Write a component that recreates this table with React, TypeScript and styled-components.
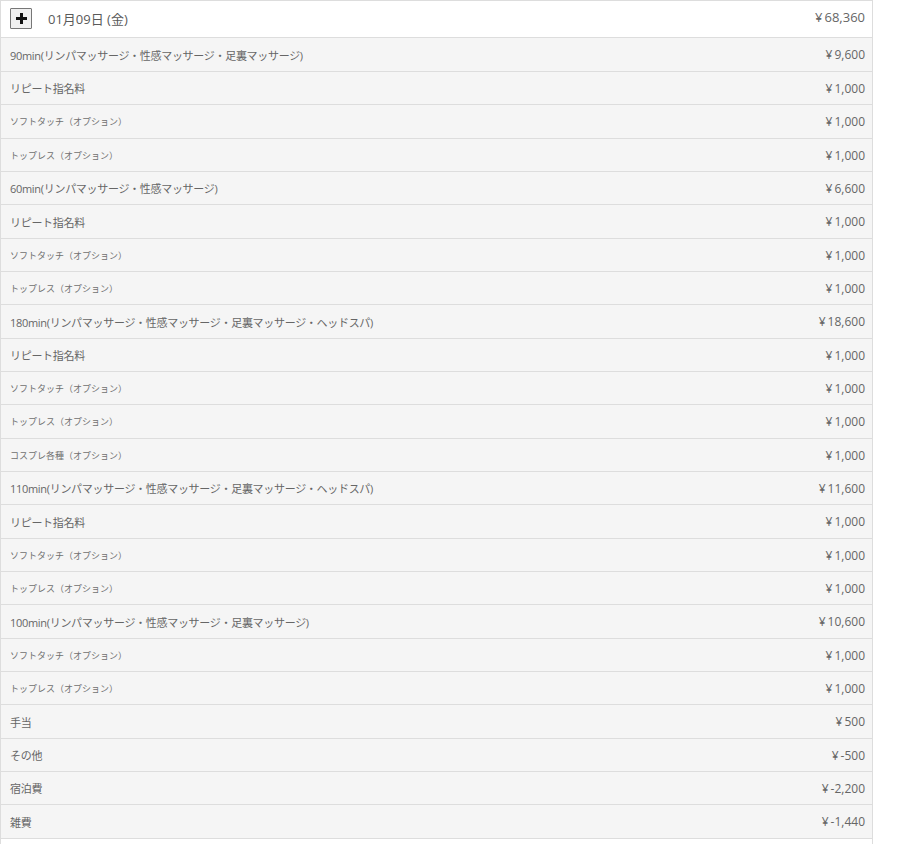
import React from "react";
import styled, { createGlobalStyle } from "styled-components";

const Global = createGlobalStyle`
  html, body { margin: 0; padding: 0; background: #fff; }
  body { font-family: "Open Sans", "Noto Sans CJK JP", sans-serif; color: #555; }
`;

const Table = styled.div`
  width: 873px;
  box-sizing: border-box;
  border-left: 1px solid #ddd;
  border-right: 1px solid #ddd;
  border-top: 1px solid #ddd;
`;

const HeaderRow = styled.div`
  display: flex;
  align-items: center;
  height: 37px;
  box-sizing: border-box;
  border-bottom: 1px solid #ddd;
  background: #fff;
  padding: 0 7px 0 9px;
`;

const ToggleButton = styled.button`
  width: 22px;
  height: 21px;
  margin-top: -1px;
  padding: 0;
  box-sizing: border-box;
  border: 1px solid #777;
  background: #f0f0f0;
  display: flex;
  align-items: center;
  justify-content: center;
  border-radius: 1px;
`;

const DateLabel = styled.span`
  margin-left: 16px;
  font-size: 13px;
  color: #5a5a5a;
  flex: 1;
  margin-top: -1px;
`;

const Total = styled.span`
  font-size: 13px;
  color: #666;
  margin-top: -4px;
`;

const Row = styled.div<{ $h: number }>`
  display: flex;
  align-items: center;
  justify-content: space-between;
  height: ${(p) => p.$h}px;
  box-sizing: border-box;
  border-bottom: 1px solid #ddd;
  background: #f5f5f5;
  padding: 0 7px 0 9px;
`;

const Label = styled.span<{ $small?: boolean }>`
  font-size: ${(p) => (p.$small ? "9px" : "11px")};
  letter-spacing: ${(p) => (p.$small ? "0" : "-0.3px")};
  color: ${(p) => (p.$small ? "#707070" : "#666")};
`;

const Amount = styled.span`
  font-size: 12px;
  color: #666;
`;

const Yen = styled.span`
  margin-right: 2px;
`;

const Tail = styled.div`
  height: 8px;
  background: #fff;
`;

type Item = { label: string; amount: string; small?: boolean };

const items: Item[] = [
  { label: "90min(リンパマッサージ・性感マッサージ・足裏マッサージ)", amount: "9,600" },
  { label: "リピート指名料", amount: "1,000" },
  { label: "ソフトタッチ（オプション）", amount: "1,000", small: true },
  { label: "トップレス（オプション）", amount: "1,000", small: true },
  { label: "60min(リンパマッサージ・性感マッサージ)", amount: "6,600" },
  { label: "リピート指名料", amount: "1,000" },
  { label: "ソフトタッチ（オプション）", amount: "1,000", small: true },
  { label: "トップレス（オプション）", amount: "1,000", small: true },
  { label: "180min(リンパマッサージ・性感マッサージ・足裏マッサージ・ヘッドスパ)", amount: "18,600" },
  { label: "リピート指名料", amount: "1,000" },
  { label: "ソフトタッチ（オプション）", amount: "1,000", small: true },
  { label: "トップレス（オプション）", amount: "1,000", small: true },
  { label: "コスプレ各種（オプション）", amount: "1,000", small: true },
  { label: "110min(リンパマッサージ・性感マッサージ・足裏マッサージ・ヘッドスパ)", amount: "11,600" },
  { label: "リピート指名料", amount: "1,000" },
  { label: "ソフトタッチ（オプション）", amount: "1,000", small: true },
  { label: "トップレス（オプション）", amount: "1,000", small: true },
  { label: "100min(リンパマッサージ・性感マッサージ・足裏マッサージ)", amount: "10,600" },
  { label: "ソフトタッチ（オプション）", amount: "1,000", small: true },
  { label: "トップレス（オプション）", amount: "1,000", small: true },
  { label: "手当", amount: "500" },
  { label: "その他", amount: "-500" },
  { label: "宿泊費", amount: "-2,200" },
  { label: "雑費", amount: "-1,440" },
];

// row bottom borders in the reference: 71, 104, 138, 171, ... 838
const bottom = (i: number) => (i < 0 ? 37 : Math.round(71 + i * 33.33));
const rowHeight = (i: number) => bottom(i) - bottom(i - 1);

export default function App() {
  return (
    <>
      <Global />
      <Table>
        <HeaderRow>
          <ToggleButton aria-label="expand">
            <svg width="11" height="11" viewBox="0 0 11 11">
              <rect x="4" y="0" width="3" height="11" fill="#111" />
              <rect x="0" y="4" width="11" height="3" fill="#111" />
            </svg>
          </ToggleButton>
          <DateLabel>01月09日 (金)</DateLabel>
          <Total>
            <Yen>¥</Yen>68,360
          </Total>
        </HeaderRow>
        {items.map((it, i) => (
          <Row key={i} $h={rowHeight(i)}>
            <Label $small={it.small}>{it.label}</Label>
            <Amount>
              <Yen>¥</Yen>
              {it.amount}
            </Amount>
          </Row>
        ))}
        <Tail />
      </Table>
    </>
  );
}
